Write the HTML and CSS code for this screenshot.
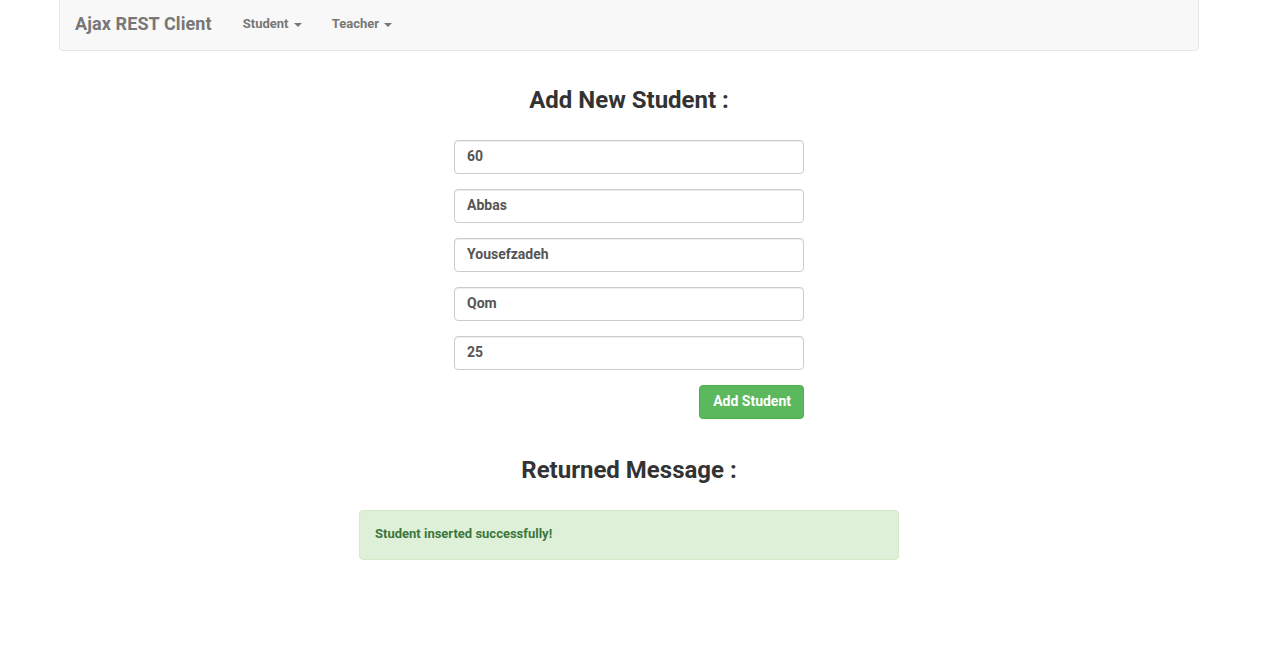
FILE: index.html
```html
<!DOCTYPE html>
<html>
<head>
<meta charset="utf-8">
<link rel="stylesheet" href="styles.css">
</head>
<body>
<div class="page">
  <nav class="navbar">
    <a class="brand">Ajax REST Client</a>
    <ul class="nav">
      <li><a>Student <span class="caret"></span></a></li>
      <li><a>Teacher <span class="caret"></span></a></li>
    </ul>
  </nav>
  <main class="main">
    <h2 class="title">Add New Student :</h2>
    <form class="form">
      <input class="field" value="60">
      <input class="field" value="Abbas">
      <input class="field" value="Yousefzadeh">
      <input class="field" value="Qom">
      <input class="field" value="25">
      <div class="actions"><button type="button" class="btn">Add Student</button></div>
    </form>
    <h2 class="title title-msg">Returned Message :</h2>
    <div class="alert">Student inserted successfully!</div>
  </main>
</div>
</body>
</html>
```
FILE: styles.css
```css
* { box-sizing: border-box; }
html, body { margin: 0; padding: 0; background: #fff; }
body {
  font-family: Roboto, "Liberation Sans", Arial, sans-serif;
  font-weight: bold;
  font-size: 14px;
  color: #333;
}
.page { width: 1258px; }
.navbar {
  width: 1140px;
  height: 52px;
  margin: -1px auto 0;
  background: #f8f8f8;
  border: 1px solid #e7e7e7;
  border-radius: 0 0 4px 4px;
  display: flex;
  align-items: center;
  padding: 0 15px 3px;
}
.brand {
  font-size: 18px;
  letter-spacing: 0.1px;
  color: #777;
  margin-right: 16px;
}
.nav { list-style: none; margin: 0; padding: 0; display: flex; }
.nav a {
  display: block;
  padding: 0 15px;
  font-size: 13px;
  color: #777;
}
.caret {
  display: inline-block;
  width: 0; height: 0;
  border-top: 4px solid #777;
  border-left: 4px solid transparent;
  border-right: 4px solid transparent;
  vertical-align: middle;
  margin-left: 2px;
}
.main { display: flex; flex-direction: column; align-items: center; }
.title {
  font-size: 24px;
  font-weight: bold;
  color: #333;
  margin: 34px 0 0;
  line-height: 30px;
}
.form {
  width: 350px;
  margin-top: 25px;
  display: flex;
  flex-direction: column;
  gap: 15px;
}
.field {
  height: 34px;
  width: 100%;
  border: 1px solid #ccc;
  border-radius: 4px;
  padding: 0 12px 2px;
  font-family: inherit;
  font-weight: bold;
  font-size: 14px;
  color: #555;
  background: #fff;
  box-shadow: inset 0 1px 1px rgba(0,0,0,.075);
}
.actions { display: flex; justify-content: flex-end; }
.btn {
  height: 34px;
  padding: 0 12px 2px 13px;
  background: #5cb85c;
  border: 1px solid #4cae4c;
  border-radius: 4px;
  color: #fff;
  font-family: inherit;
  font-weight: bold;
  font-size: 14px;
}
.title-msg { margin-top: 36px; }
.alert {
  width: 540px;
  height: 50px;
  margin-top: 25px;
  background: #dff0d8;
  border: 1px solid #d6e9c6;
  border-radius: 4px;
  color: #3c763d;
  font-size: 13px;
  padding: 0 15px 3px;
  display: flex;
  align-items: center;
}
```
